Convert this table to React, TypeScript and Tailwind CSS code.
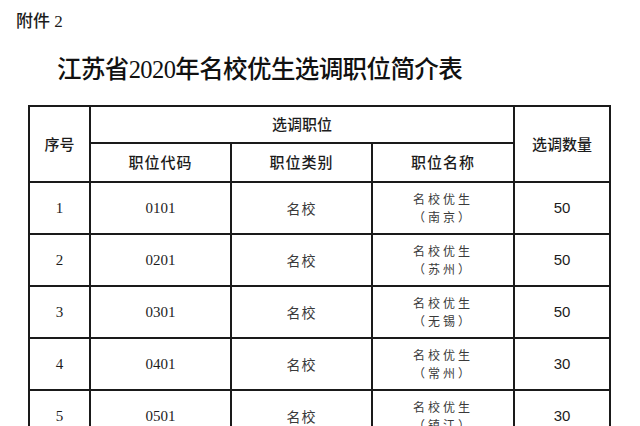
import React from 'react';

const serif = { fontFamily: '"Liberation Serif", "Noto Sans CJK SC", serif' };
const cjk = { fontFamily: '"Noto Sans CJK SC", sans-serif' };

const rows = [
  { no: '1', code: '0101', city: '南京', count: '50' },
  { no: '2', code: '0201', city: '苏州', count: '50' },
  { no: '3', code: '0301', city: '无锡', count: '50' },
  { no: '4', code: '0401', city: '常州', count: '30' },
  { no: '5', code: '0501', city: '镇江', count: '30' },
];

export default function App() {
  return (
    <div className="w-[640px] h-[426px] overflow-hidden bg-white text-[#1c1c1c]">
      {/* Attachment label */}
      <div className="h-[44px] flex items-center pl-[16px] text-[17px] font-medium" style={serif}>
        附件 2
      </div>

      {/* Title */}
      <div
        className="h-[52px] flex items-center pl-[57px] text-[24.5px] font-medium tracking-[-0.6px] text-[#111]"
        style={serif}
      >
        江苏省2020年名校优生选调职位简介表
      </div>

      <table className="ml-[28px] mt-[9px] border-collapse border-2 border-[#1a1a1a] table-fixed w-[581px]">
        <colgroup>
          <col className="w-[61px]" />
          <col className="w-[141px]" />
          <col className="w-[141px]" />
          <col className="w-[142px]" />
          <col className="w-[96px]" />
        </colgroup>
        <thead>
          <tr className="h-[37px]">
            <th rowSpan={2} className="border-2 border-[#1a1a1a] text-[15px] font-medium text-center align-middle" style={cjk}>
              序号
            </th>
            <th colSpan={3} className="border-2 border-[#1a1a1a] text-[15px] font-medium text-center align-middle" style={cjk}>
              选调职位
            </th>
            <th rowSpan={2} className="border-2 border-[#1a1a1a] text-[15px] font-medium text-center align-middle" style={cjk}>
              选调数量
            </th>
          </tr>
          <tr className="h-[39px]">
            {['职位代码', '职位类别', '职位名称'].map((t) => (
              <th key={t} className="border-2 border-[#1a1a1a] text-[15px] font-medium text-center align-middle tracking-[1px]" style={cjk}>
                {t}
              </th>
            ))}
          </tr>
        </thead>
        <tbody>
          {rows.map((r) => (
            <tr key={r.no} className="h-[52px]">
              <td className="border-2 border-[#1a1a1a] text-center align-middle text-[15px]" style={serif}>
                {r.no}
              </td>
              <td className="border-2 border-[#1a1a1a] text-center align-middle text-[15px]" style={serif}>
                {r.code}
              </td>
              <td className="border-2 border-[#1a1a1a] text-center align-middle text-[14px] tracking-[1px] text-[#3a3a3a]" style={cjk}>
                名校
              </td>
              <td className="border-2 border-[#1a1a1a] text-center align-middle text-[12px] leading-[18px] text-[#3a3a3a]" style={cjk}>
                <div className="tracking-[3px]">名校优生</div>
                <div className="tracking-[3px]">（{r.city}）</div>
              </td>
              <td className="border-2 border-[#1a1a1a] text-center align-middle text-[15px]" style={{ fontFamily: '"Liberation Sans", sans-serif' }}>
                {r.count}
              </td>
            </tr>
          ))}
        </tbody>
      </table>
    </div>
  );
}
